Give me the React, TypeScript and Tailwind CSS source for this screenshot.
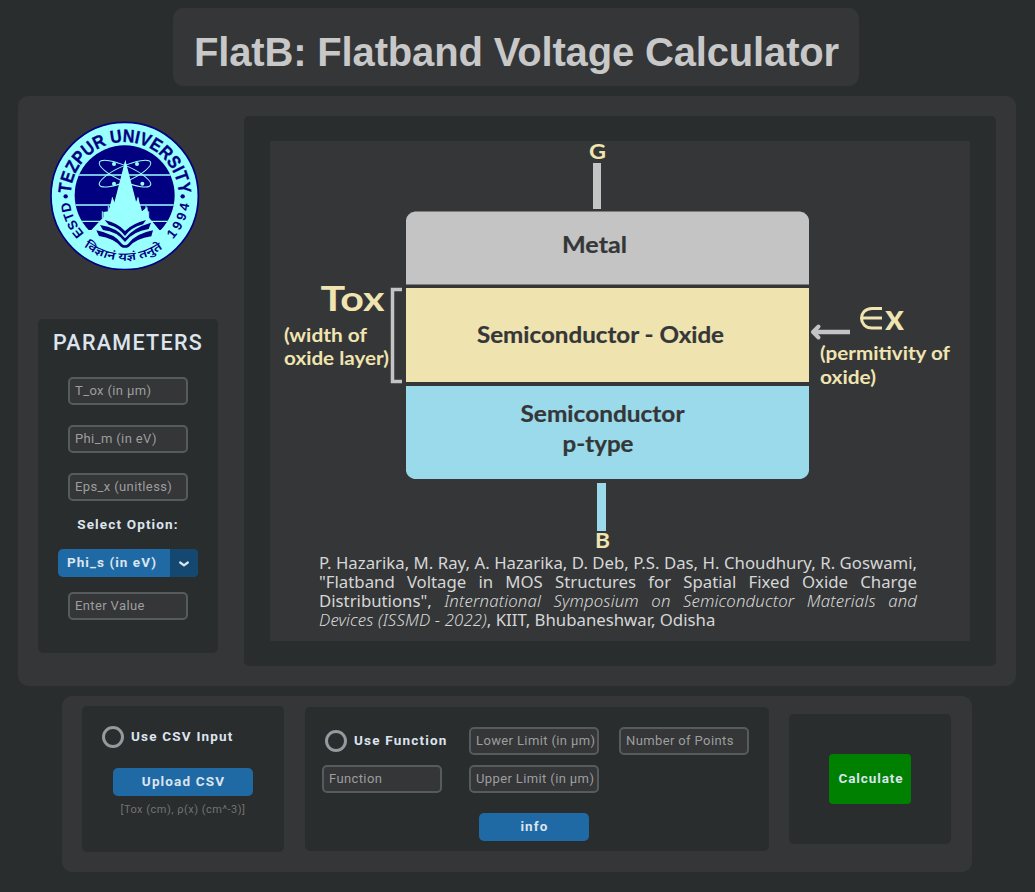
import type { ReactNode } from "react";

const NAVY = "#000080";
const AQUA = "#99ffff";

function Field({ placeholder, className }: { placeholder: string; className: string }) {
  return (
    <input
      type="text"
      placeholder={placeholder}
      className={`h-7 shrink-0 rounded-[5px] border-2 border-[#565b5e] bg-[#343638] pb-0.5 pl-[5px] text-[13px] tracking-[0.38px] text-[#dce4ee] outline-none placeholder:text-[#9e9e9e] placeholder:opacity-100 ${className}`}
    />
  );
}

function BlueButton({ children, className }: { children: ReactNode; className: string }) {
  return (
    <button
      className={`flex h-7 items-center justify-center rounded-[5px] bg-[#1f6aa5] pb-px pl-px text-[13.5px] font-bold tracking-[1.15px] text-[#dce4ee] ${className}`}
    >
      {children}
    </button>
  );
}

function RadioOption({ label, className }: { label: string; className: string }) {
  return (
    <label className={`flex h-[22px] items-center gap-[7px] ${className}`}>
      <span className="size-[22px] shrink-0 rounded-full border-[3px] border-[#949a9f]" />
      <span className="whitespace-nowrap pb-0.5 text-[13.5px] font-bold tracking-[1.2px] text-[#dce4ee]">{label}</span>
    </label>
  );
}

function UniversitySeal() {
  return (
    <svg viewBox="30 30 450 450" className="mt-1 ml-3 block size-[150px] shrink-0">
      <defs>
        <path id="outerArc" d="M92 258 A162 162 0 0 1 416 258" />
        <path id="estdArc" d="M133.300 370.500 A165 165 0 0 1 89 258" />
        <path id="yearArc" d="M399 388.500 A195 195 0 0 0 449 258" />
        <path id="mottoArc" d="M110 388 A194 194 0 0 0 398 388" />
        <clipPath id="disc">
          <circle cx="254" cy="256" r="150" />
        </clipPath>
      </defs>
      <circle cx="254" cy="258" r="221" fill={AQUA} stroke={NAVY} strokeWidth="5" />
      <g clipPath="url(#disc)">
        <rect x="100" y="100" width="310" height="260" fill={NAVY} />
        <path d="M100 195H410M100 285H410M100 334H410" stroke={AQUA} strokeWidth="4" />
        <path d="M152 362 L190 322 V306 L205 304 L217 262 L228 285 L256 150 L284 285 L294 262 L306 304 L322 290 L326 322 L360 362Z" fill={AQUA} />
      </g>
      <g fill="none" stroke={AQUA} strokeWidth="3">
        <ellipse cx="255" cy="191" rx="84" ry="23" transform="rotate(24 255 191)" />
        <ellipse cx="255" cy="191" rx="84" ry="23" transform="rotate(-24 255 191)" />
      </g>
      <g fill={AQUA}>
        <circle cx="222" cy="162" r="6" />
        <circle cx="291" cy="162" r="6" />
        <circle cx="222" cy="221" r="6" />
        <circle cx="307" cy="221" r="6" />
        <path d="M256 150 L287 270 L302 350 H210 L225 270Z" />
      </g>
      <path d="M217 262 V290M205 288 V316M187 304 V325M294 262 V290M318 288 V316M326 304 V325" stroke={AQUA} strokeWidth="3" />
      <g fill={NAVY}>
        <path d="M194 330 Q236 340 255 363 Q278 340 318 330 L309 343 Q272 353 255 378 Q239 353 206 344Z" />
        <path d="M180 345 Q232 353 255 385 Q280 353 333 338 L326 357 Q279 364 255 396 Q231 364 189 360Z" />
        <path d="M169 361 Q225 372 246 402 Q255 410 264 402 Q286 371 339 361 L334 379 Q288 386 267 410 Q255 417 243 410 Q222 385 177 378Z" />
      </g>
      <g fill={NAVY} fontFamily="'Liberation Sans', Arial, sans-serif" fontWeight="700">
        <text fontSize="54" stroke={NAVY} strokeWidth="1">
          <textPath href="#outerArc" startOffset="7" textLength="495" lengthAdjust="spacingAndGlyphs">TEZPUR UNIVERSITY</textPath>
        </text>
        <text fontSize="40">
          <textPath href="#estdArc" startOffset="0" textLength="106" lengthAdjust="spacingAndGlyphs">ESTD</textPath>
        </text>
        <text fontSize="40">
          <textPath href="#yearArc" startOffset="0" textLength="119" lengthAdjust="spacing">1994</textPath>
        </text>
      </g>
      <text fill={NAVY} fontSize="34" fontWeight="600" fontFamily="'Noto Sans Devanagari', 'Noto Sans', sans-serif">
        <textPath href="#mottoArc" startOffset="30" textLength="254" lengthAdjust="spacingAndGlyphs">विज्ञानं यज्ञं तनुते</textPath>
      </text>
      <circle cx="77" cy="259" r="6.5" fill={NAVY} />
      <circle cx="428" cy="259" r="6.5" fill={NAVY} />
    </svg>
  );
}

function MosDiagram() {
  return (
    <svg
      viewBox="270 141 700 410"
      className="block h-[410px] w-[700px] overflow-visible"
      fontFamily="Lato, 'Open Sans', sans-serif"
      fontWeight="700"
    >
      <rect x="593" y="163" width="8" height="46" fill="#c4c4c4" />
      <path d="M406 284.500V220Q407 213 415 211.500H800Q808 213 809 220V284.500Z" fill="#c4c4c4" />
      <rect x="406" y="288" width="403" height="94" fill="#efe3af" />
      <path d="M406 386H809V471Q808 477 801 479H414Q407 477 406 471Z" fill="#9adaea" />
      <rect x="597" y="483" width="9" height="48" fill="#9adaea" />
      <path d="M402 289.500H392.500V381.500H402" fill="none" stroke="#c4c4c4" strokeWidth="3.500" />
      <path d="M850 332H814" fill="none" stroke="#c4c4c4" strokeWidth="4.500" />
      <path d="M818.500 326.500L813 332L818.500 337.500" fill="none" stroke="#c4c4c4" strokeWidth="4" strokeLinecap="round" strokeLinejoin="round" />
      <g fill="#f0e4b0">
        <text x="589" y="159" fontSize="21" textLength="17" lengthAdjust="spacingAndGlyphs">G</text>
        <text x="595" y="548" fontSize="20" textLength="15" lengthAdjust="spacingAndGlyphs">B</text>
        <text x="320.500" y="311" fontSize="34" textLength="64" lengthAdjust="spacingAndGlyphs">Tox</text>
        <text x="284" y="342" fontSize="18.500" textLength="83" lengthAdjust="spacingAndGlyphs">(width of</text>
        <text x="284" y="365" fontSize="18.500" textLength="105" lengthAdjust="spacingAndGlyphs">oxide layer)</text>
        <text x="885" y="330" fontSize="36" textLength="19" lengthAdjust="spacingAndGlyphs">x</text>
        <text x="820" y="360" fontSize="18.500" textLength="130" lengthAdjust="spacingAndGlyphs">(permitivity of</text>
        <text x="820" y="384" fontSize="18.500" textLength="56" lengthAdjust="spacingAndGlyphs">oxide)</text>
      </g>
      <path d="M882 308.500H872C858 308.500 858 328 872 328H882M862 318H882" fill="none" stroke="#f0e4b0" strokeWidth="3" />
      <g fill="#343638" stroke="#343638" strokeWidth="0.2">
        <text x="562" y="253" fontSize="22" textLength="65" lengthAdjust="spacingAndGlyphs">Metal</text>
        <text x="477" y="343" fontSize="22" textLength="247" lengthAdjust="spacingAndGlyphs">Semiconductor - Oxide</text>
        <text x="520.500" y="421.500" fontSize="22" textLength="164" lengthAdjust="spacingAndGlyphs">Semiconductor</text>
        <text x="562.500" y="452" fontSize="22" textLength="71" lengthAdjust="spacingAndGlyphs">p-type</text>
      </g>
    </svg>
  );
}

function Citation() {
  return (
    <div className="mt-[3px] ml-[49px] w-[553px] origin-left scale-x-[1.0815] whitespace-nowrap font-['Noto_Sans','Open_Sans',sans-serif] text-[15.5px] leading-[19px] text-[#d6d6d6]">
      <p className="[text-align-last:justify]">P. Hazarika, M. Ray, A. Hazarika, D. Deb, P.S. Das, H. Choudhury, R. Goswami,</p>
      <p className="[text-align-last:justify]">"Flatband Voltage in MOS Structures for Spatial Fixed Oxide Charge</p>
      <p className="[text-align-last:justify]">
        Distributions",{" "}
        <em className="font-light tracking-[0.13px]">International Symposium on Semiconductor Materials and</em>
      </p>
      <p>
        <em className="font-light tracking-[0.13px]">Devices (ISSMD - 2022)</em>, KIIT, Bhubaneshwar, Odisha
      </p>
    </div>
  );
}

function Parameters() {
  return (
    <section className="mt-[49px] flex h-[334px] w-[180px] flex-col items-center rounded-[5px] bg-[#2a2d2e]">
      <h2 className="mt-[9px] text-[21.5px] leading-[30px] font-medium tracking-[1.3px] text-[#dce4ee]">PARAMETERS</h2>
      <Field placeholder="T_ox (in µm)" className="mt-[19px] w-[120px]" />
      <Field placeholder="Phi_m (in eV)" className="mt-5 w-[120px]" />
      <Field placeholder="Eps_x (unitless)" className="mt-5 w-[120px]" />
      <div className="mt-[13px] text-[13.5px] leading-5 font-bold tracking-[1.15px] text-[#dce4ee]">Select Option:</div>
      <button className="mt-[15px] flex h-7 w-[140px] shrink-0 overflow-hidden rounded-[5px] bg-[#1f6aa5] text-[13.5px] font-bold text-[#dce4ee]">
        <span className="flex h-7 flex-1 items-center pb-px pl-[9px] tracking-[1.05px]">Phi_s (in eV)</span>
        <span className="flex h-7 w-7 items-center justify-center bg-[#144870]">
          <svg viewBox="0 0 10 6" className="mt-px h-1.5 w-2.5" fill="none" stroke="#dce4ee" strokeWidth="2.2" strokeLinecap="round" strokeLinejoin="round">
            <path d="M1.200 1.500L5 4.300L8.800 1.500" />
          </svg>
        </span>
      </button>
      <Field placeholder="Enter Value" className="mt-[15px] w-[120px]" />
    </section>
  );
}

export default function App() {
  return (
    <div className="flex h-[892px] w-[1035px] flex-col overflow-hidden bg-[#2a2d2e] pt-2 font-[Roboto,sans-serif]">
      <header className="ml-[173px] flex h-[78px] w-[686px] shrink-0 items-center justify-center rounded-[10px] bg-[#343638] pt-2.5 pl-px">
        <h1 className="whitespace-nowrap font-['Liberation_Sans',Arial,sans-serif] text-[40px] leading-none font-bold tracking-[-0.16px] text-[#c8c8c8]">
          FlatB: Flatband Voltage Calculator
        </h1>
      </header>

      <main className="mt-2.5 ml-[18px] flex h-[590px] w-[998px] shrink-0 gap-[26px] rounded-[10px] bg-[#343638] p-5">
        <div className="flex w-[180px] flex-col">
          <UniversitySeal />
          <Parameters />
        </div>
        <div className="h-[550px] w-[752px] rounded-[5px] bg-[#2a2d2e] px-[26px] py-[25px]">
          <div className="h-[500px] w-[700px] bg-[#343638]">
            <MosDiagram />
            <Citation />
          </div>
        </div>
      </main>

      <footer className="mt-2.5 ml-[62px] flex h-44 w-[910px] shrink-0 rounded-[10px] bg-[#343638] pl-5">
        <section className="mt-2.5 flex h-[146px] w-[202px] flex-col rounded-[5px] bg-[#2a2d2e] pt-5">
          <RadioOption label="Use CSV Input" className="ml-5" />
          <BlueButton className="mt-5 ml-[31px] w-[140px] shrink-0">Upload CSV</BlueButton>
          <p className="mt-1.5 text-center text-[11px] leading-4 tracking-[0.5px] text-[#737373]">[Tox (cm), ρ(x) (cm^-3)]</p>
        </section>

        <section className="mt-[11px] ml-[21px] h-36 w-[464px] rounded-[5px] bg-[#2a2d2e] pt-5 pl-[17px]">
          <div className="grid grid-cols-[147px_150px_130px] gap-y-2.5">
            <RadioOption label="Use Function" className="mt-[3px] ml-[3px]" />
            <Field placeholder="Lower Limit (in µm)" className="w-[130px]" />
            <Field placeholder="Number of Points" className="w-[130px]" />
            <Field placeholder="Function" className="w-[120px]" />
            <Field placeholder="Upper Limit (in µm)" className="w-[130px]" />
          </div>
          <BlueButton className="mt-5 ml-[157px] w-[110px]">info</BlueButton>
        </section>

        <section className="mt-[18px] ml-5 flex h-[130px] w-[162px] items-center justify-center rounded-[5px] bg-[#2a2d2e]">
          <button className="h-[50px] w-[82px] rounded-[4px] bg-[#008000] pb-px pl-0.5 text-[13.5px] font-bold tracking-[0.9px] text-[#dce4ee]">
            Calculate
          </button>
        </section>
      </footer>
    </div>
  );
}
